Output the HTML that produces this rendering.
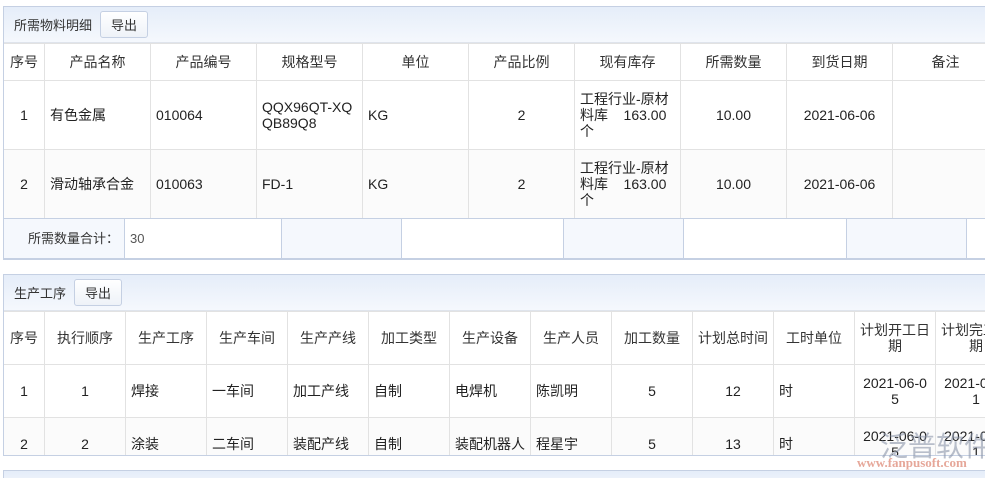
<!DOCTYPE html>
<html><head><meta charset="utf-8"><style>
*{box-sizing:border-box;margin:0;padding:0}
html,body{width:985px;height:478px;overflow:hidden}
body{background:#fff;font-family:"Liberation Sans","Noto Sans CJK SC",sans-serif;font-size:14px;color:#222;position:relative}
.panel{position:absolute;left:3px;width:990px;border:1px solid #c5d0e3;overflow:hidden;background:#fff}
.hd{height:36px;background:linear-gradient(#e5edf9,#f5f8fd);display:flex;align-items:center;padding-left:10px;border-bottom:1px solid #dfe4ec;color:#333;font-size:13px}
.btn{margin-left:8px;height:27px;padding:0 10px;border:1px solid #c5d0e3;border-radius:3px;background:linear-gradient(#fff,#eef2f8);display:flex;align-items:center}
table{border-collapse:collapse;table-layout:fixed}
td{border:1px solid #e2e2e2;padding:0 5px;line-height:16px;vertical-align:middle;overflow:hidden;word-break:break-all}
th{border:1px solid #e2e2e2;font-weight:normal;color:#333;line-height:16px;padding:0 3px}
.c{text-align:center}
tr.alt td{background:#fbfbfb}
.sum td{border:1px solid #c5d0e3;height:40px;color:#555;font-size:13px}
.bg{background:#f5f8fd}
</style></head><body>
<div class="panel" style="top:6px;height:254px">
<div class="hd">所需物料明细<div class="btn">导出</div></div>
<table style="width:1095px;margin-left:-1px">
<colgroup><col style="width:41px"><col style="width:106px"><col style="width:106px"><col style="width:106px"><col style="width:106px"><col style="width:106px"><col style="width:106px"><col style="width:106px"><col style="width:106px"><col style="width:106px"><col style="width:106px"></colgroup>
<tr style="height:37px"><th>序号</th><th>产品名称</th><th>产品编号</th><th>规格型号</th><th>单位</th><th>产品比例</th><th>现有库存</th><th>所需数量</th><th>到货日期</th><th>备注</th><th></th></tr>
<tr style="height:69px"><td class="c">1</td><td>有色金属</td><td>010064</td><td>QQX96QT-XQ<br>QB89Q8</td><td>KG</td><td class="c">2</td><td>工程行业-原材<br>料库&nbsp;&nbsp;&nbsp; 163.00<br>个</td><td class="c">10.00</td><td class="c">2021-06-06</td><td></td><td></td></tr>
<tr class="alt" style="height:69px"><td class="c">2</td><td>滑动轴承合金</td><td>010063</td><td>FD-1</td><td>KG</td><td class="c">2</td><td>工程行业-原材<br>料库&nbsp;&nbsp;&nbsp; 163.00<br>个</td><td class="c">10.00</td><td class="c">2021-06-06</td><td></td><td></td></tr>
</table>
<table class="sum" style="width:1100px;margin-left:-1px;margin-top:-1px">
<colgroup><col style="width:121px"><col style="width:157px"><col style="width:120px"><col style="width:162px"><col style="width:120px"><col style="width:163px"><col style="width:120px"><col style="width:137px"></colgroup>
<tr><td class="bg" style="text-align:right;color:#333">所需数量合计：</td><td>30</td><td class="bg"></td><td></td><td class="bg"></td><td></td><td class="bg"></td><td></td></tr>
</table>
</div>
<div class="panel" style="top:274px;height:182px">
<div class="hd">生产工序<div class="btn">导出</div></div>
<table style="width:1095px;margin-left:-1px">
<colgroup><col style="width:41px"><col style="width:81px"><col style="width:81px"><col style="width:81px"><col style="width:81px"><col style="width:81px"><col style="width:81px"><col style="width:81px"><col style="width:81px"><col style="width:81px"><col style="width:81px"><col style="width:81px"><col style="width:81px"><col style="width:81px"></colgroup>
<tr style="height:53px"><th>序号</th><th>执行顺序</th><th>生产工序</th><th>生产车间</th><th>生产产线</th><th>加工类型</th><th>生产设备</th><th>生产人员</th><th>加工数量</th><th>计划总时间</th><th>工时单位</th><th>计划开工日<br>期</th><th>计划完工日<br>期</th><th></th></tr>
<tr style="height:53px"><td class="c">1</td><td class="c">1</td><td>焊接</td><td>一车间</td><td>加工产线</td><td>自制</td><td>电焊机</td><td>陈凯明</td><td class="c">5</td><td class="c">12</td><td>时</td><td class="c">2021-06-0<br>5</td><td class="c">2021-06-0<br>1</td><td></td></tr>
<tr class="alt" style="height:53px"><td class="c">2</td><td class="c">2</td><td>涂装</td><td>二车间</td><td>装配产线</td><td>自制</td><td style="white-space:nowrap">装配机器人</td><td>程星宇</td><td class="c">5</td><td class="c">13</td><td>时</td><td class="c">2021-06-0<br>5</td><td class="c">2021-06-0<br>1</td><td></td></tr>
</table>
</div>
<div class="panel" style="top:470px;height:20px;background:linear-gradient(#e5edf9,#f5f8fd)"></div>
<div style="position:absolute;left:880px;top:432px;font-size:28px;line-height:30px;white-space:nowrap;color:rgba(140,150,170,0.6)">泛普软件</div>
<div style="position:absolute;left:857px;top:455px;font-size:13px;white-space:nowrap;font-family:'Liberation Serif',serif;color:rgba(220,130,110,0.7);font-weight:bold">www.fanpusoft.com</div>
</body></html>
